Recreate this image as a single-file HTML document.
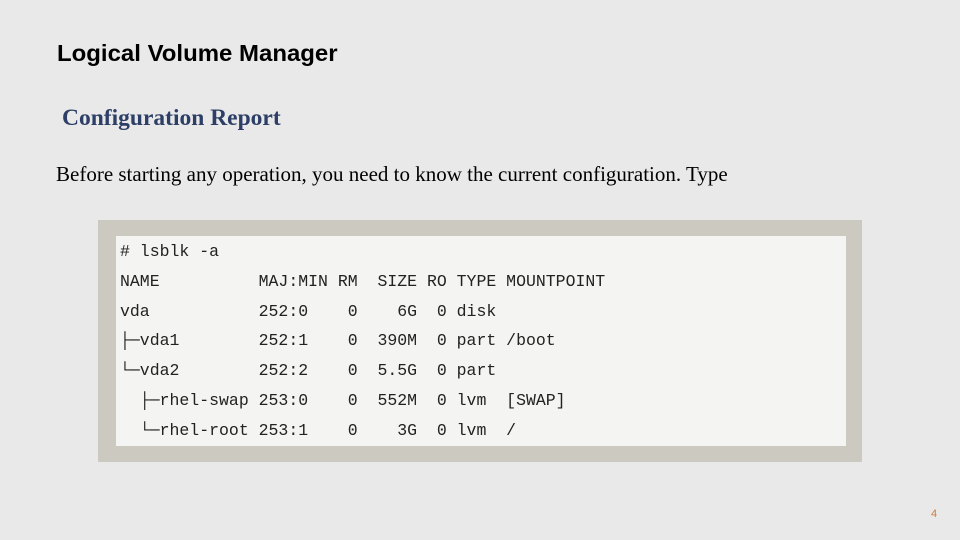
<!DOCTYPE html>
<html><head><style>
html,body{margin:0;padding:0}
body{width:960px;height:540px;background:#e9e9e9;position:relative;overflow:hidden}
.t{position:absolute;white-space:pre}
#h{left:57px;top:40px;font:bold 23.5px "Liberation Sans",sans-serif;color:#000;transform:scaleX(1.02);transform-origin:left}
#s{left:62px;top:105px;font:bold 23.5px "Liberation Serif",serif;color:#2d3f66;font-weight:bold}
#p{left:56px;top:162px;font:21px "Liberation Serif",serif;color:#000}
#o{position:absolute;left:98px;top:220px;width:764px;height:242px;background:#ccc9c1}
#i{position:absolute;left:116px;top:236px;width:730px;height:210px;background:#f4f4f2}
pre{position:absolute;left:120px;top:237px;margin:0;font:16.5px/29.8px "Liberation Mono",monospace;color:#222}
#n{left:931px;top:508px;font:11px "Liberation Sans",sans-serif;color:#d07a40}
</style></head><body>
<div class="t" id="h">Logical Volume Manager</div>
<div class="t" id="s">Configuration Report</div>
<div class="t" id="p">Before starting any operation, you need to know the current configuration. Type</div>
<div id="o"></div><div id="i"></div>
<pre># lsblk -a
NAME          MAJ:MIN RM  SIZE RO TYPE MOUNTPOINT
vda           252:0    0    6G  0 disk
├─vda1        252:1    0  390M  0 part /boot
└─vda2        252:2    0  5.5G  0 part
  ├─rhel-swap 253:0    0  552M  0 lvm  [SWAP]
  └─rhel-root 253:1    0    3G  0 lvm  /</pre>
<div class="t" id="n">4</div>
</body></html>
